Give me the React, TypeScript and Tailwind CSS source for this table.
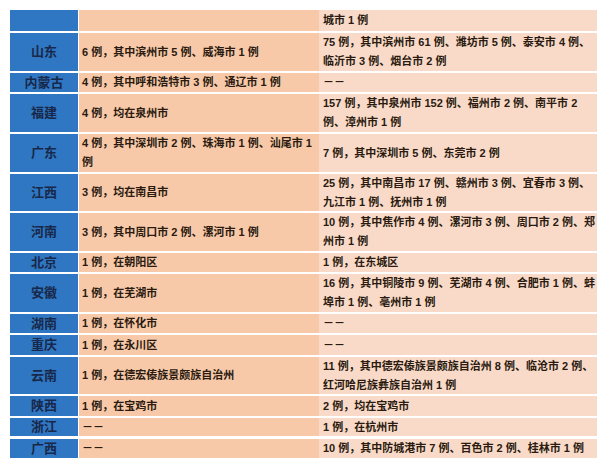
const rows: { name: string; a: string; b: string; h: string; thick?: boolean }[] = [
  { name: "", a: "", b: "城市 1 例", h: "h-[21px]" },
  { name: "山东", a: "6 例，其中滨州市 5 例、威海市 1 例", b: "75 例，其中滨州市 61 例、潍坊市 5 例、泰安市 4 例、临沂市 3 例、烟台市 2 例", h: "h-[40px]" },
  { name: "内蒙古", a: "4 例，其中呼和浩特市 3 例、通辽市 1 例", b: "－－", h: "h-[21px]" },
  { name: "福建", a: "4 例，均在泉州市", b: "157 例，其中泉州市 152 例、福州市 2 例、南平市 2 例、漳州市 1 例", h: "h-[40px]" },
  { name: "广东", a: "4 例，其中深圳市 2 例、珠海市 1 例、汕尾市 1 例", b: "7 例，其中深圳市 5 例、东莞市 2 例", h: "h-[40px]" },
  { name: "江西", a: "3 例，均在南昌市", b: "25 例，其中南昌市 17 例、赣州市 3 例、宜春市 3 例、九江市 1 例、抚州市 1 例", h: "h-[39px]" },
  { name: "河南", a: "3 例，其中周口市 2 例、漯河市 1 例", b: "10 例，其中焦作市 4 例、漯河市 3 例、周口市 2 例、郑州市 1 例", h: "h-[40px]" },
  { name: "北京", a: "1 例，在朝阳区", b: "1 例，在东城区", h: "h-[21px]" },
  { name: "安徽", a: "1 例，在芜湖市", b: "16 例，其中铜陵市 9 例、芜湖市 4 例、合肥市 1 例、蚌埠市 1 例、亳州市 1 例", h: "h-[40px]" },
  { name: "湖南", a: "1 例，在怀化市", b: "－－", h: "h-[21px]" },
  { name: "重庆", a: "1 例，在永川区", b: "－－", h: "h-[22px]" },
  { name: "云南", a: "1 例，在德宏傣族景颇族自治州", b: "11 例，其中德宏傣族景颇族自治州 8 例、临沧市 2 例、红河哈尼族彝族自治州 1 例", h: "h-[39px]" },
  { name: "陕西", a: "1 例，在宝鸡市", b: "2 例，均在宝鸡市", h: "h-[22px]" },
  { name: "浙江", a: "－－", b: "1 例，在杭州市", h: "h-[20px]" },
  { name: "广西", a: "－－", b: "10 例，其中防城港市 7 例、百色市 2 例、桂林市 1 例", h: "h-[22px]", thick: true },
];

const textFont = "[font-family:'Liberation_Sans','Noto_Sans_CJK_SC',sans-serif]";

export default function App() {
  return (
    <div className="h-[468px] w-[603px] bg-white pl-[10px] pt-[10px]">
      <div className={`flex w-[587px] flex-col ${textFont}`}>
        {rows.map((r, i) => (
          <div
            key={i}
            className={`flex ${r.h} ${
              i === 0 ? "" : r.thick ? "border-t-[3px] border-white" : "border-t-2 border-white"
            }`}
          >
            <div className="flex w-[68px] items-center justify-center bg-[#2f77c2] text-[13px] font-bold text-[#18284a]">
              {r.name}
            </div>
            <div className="flex w-[241px] items-center border-l border-white bg-[#f7c9a8] pl-[3px] pr-[1px] text-[11px] font-bold leading-[19px] text-[#2a1a10]">
              <span>{r.a}</span>
            </div>
            <div className="flex flex-1 items-center bg-[#f9dac8] pl-[4px] pr-[2px] text-[11px] font-bold leading-[19px] text-[#2a1a10]">
              <span>{r.b}</span>
            </div>
          </div>
        ))}
      </div>
    </div>
  );
}
